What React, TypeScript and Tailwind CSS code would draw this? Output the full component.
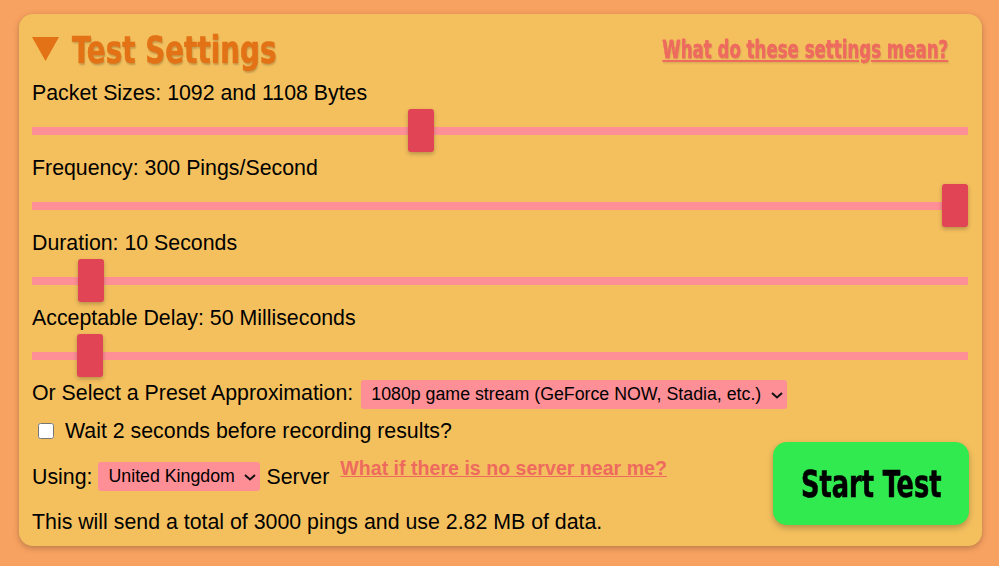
const sans = { fontFamily: '"Liberation Sans", Arial, sans-serif' };
const display = { fontFamily: '"DejaVu Sans Condensed", "DejaVu Sans", sans-serif' };

const sliderClass =
  'block w-full h-[43px] appearance-none bg-transparent cursor-pointer ' +
  '[&::-webkit-slider-runnable-track]:h-2 [&::-webkit-slider-runnable-track]:bg-[#ff8f96] ' +
  '[&::-webkit-slider-thumb]:appearance-none [&::-webkit-slider-thumb]:w-[26px] [&::-webkit-slider-thumb]:h-[43px] ' +
  '[&::-webkit-slider-thumb]:mt-[-18px] [&::-webkit-slider-thumb]:rounded-[3px] [&::-webkit-slider-thumb]:bg-[#e04455] ' +
  '[&::-webkit-slider-thumb]:shadow-[0_2px_4px_rgba(0,0,0,0.25)]';

const sliders = [
  { label: 'Packet Sizes: 1092 and 1108 Bytes', value: 413 },
  { label: 'Frequency: 300 Pings/Second', value: 1000 },
  { label: 'Duration: 10 Seconds', value: 50 },
  { label: 'Acceptable Delay: 50 Milliseconds', value: 49 },
];

function Select({ option, className }: { option: string; className: string }) {
  return (
    <div className={`relative ${className}`}>
      <select className="h-full w-full appearance-none rounded-[3px] bg-[#ff8f96] pl-[10px] text-[17.78px] leading-[29px]">
        <option>{option}</option>
      </select>
      <svg className="pointer-events-none absolute top-[12px] right-[4px] h-[7px] w-[12px]" viewBox="0 0 12 7" fill="none">
        <path d="M1 1l5 4.5L11 1" stroke="#111" strokeWidth="2" />
      </svg>
    </div>
  );
}

export default function App() {
  return (
    <div
      className="h-[566px] w-[999px] overflow-hidden bg-[#f8a261] pt-[14px] pl-[19px] text-[21.33px] leading-[26px] text-black"
      style={sans}
    >
      <div className="h-[532px] w-[963px] rounded-[14px] bg-[#f4c05e] pt-[18px] pr-[14px] pl-[13px] shadow-[0_2px_6px_rgba(0,0,0,0.25)]">
        {/* Header */}
        <div className="flex h-[48px] items-start justify-between">
          <div className="flex items-start">
            <svg className="mt-[5px] h-[24px] w-[27px]" viewBox="0 0 27 24">
              <path d="M0 0H27L13.5 24Z" fill="#e27215" />
            </svg>
            <h1
              className="ml-[13px] origin-left scale-x-[0.835] text-[37px] leading-[38px] font-bold text-[#e27215] [-webkit-text-stroke:0.6px_#e27215] [text-shadow:1px_2px_2px_rgba(0,0,0,0.2)]"
              style={display}
            >
              Test Settings
            </h1>
          </div>
          <a
            href="#"
            className="mt-[4px] mr-[20px] origin-right scale-x-[0.77] text-[24px] leading-[28px] font-bold text-[#ee6a5f] underline [-webkit-text-stroke:0.3px_#ee6a5f] [text-shadow:1px_1px_2px_rgba(0,0,0,0.15)]"
            style={display}
          >
            What do these settings mean?
          </a>
        </div>

        {/* Sliders */}
        {sliders.map((s) => (
          <div key={s.label} className="h-[75px]">
            <div className="h-[29px]">{s.label}</div>
            <input type="range" min={0} max={1000} defaultValue={s.value} className={sliderClass} />
          </div>
        ))}

        {/* Preset */}
        <div className="mt-[-6px] flex h-[37px] items-center">
          <span>Or Select a Preset Approximation:</span>
          <Select option="1080p game stream (GeForce NOW, Stadia, etc.)" className="mt-[4px] ml-[8px] h-[29px] w-[426px]" />
        </div>
        <label className="mt-[2px] flex h-[35px] items-center pl-[6px]">
          <input type="checkbox" className="h-4 w-4" />
          <span className="ml-[11px]">Wait 2 seconds before recording results?</span>
        </label>

        {/* Footer */}
        <div className="flex items-start justify-between">
          <div className="pt-[13px]">
            <div className="flex h-[36px] items-start">
              <span className="pt-[3px]">Using:</span>
              <Select option="United Kingdom" className="mt-[1px] ml-[6px] h-[29px] w-[162px]" />
              <span className="ml-[6px] pt-[3px]">Server</span>
              <a href="#" className="mt-[-6px] ml-[11px] text-[19.6px] font-bold text-[#ee6a5f] underline">
                What if there is no server near me?
              </a>
            </div>
            <div className="mt-[12px]">This will send a total of 3000 pings and use 2.82 MB of data.</div>
          </div>
          <button className="mt-[-6px] mr-[-1px] h-[83px] w-[196px] rounded-[14px] bg-[#30ea50] pt-[8px] text-black shadow-[0_3px_6px_rgba(0,0,0,0.25)]">
            <span className="inline-block scale-x-[0.77] text-[37px] font-bold [-webkit-text-stroke:0.6px_#000]" style={display}>
              Start Test
            </span>
          </button>
        </div>
      </div>
    </div>
  );
}
